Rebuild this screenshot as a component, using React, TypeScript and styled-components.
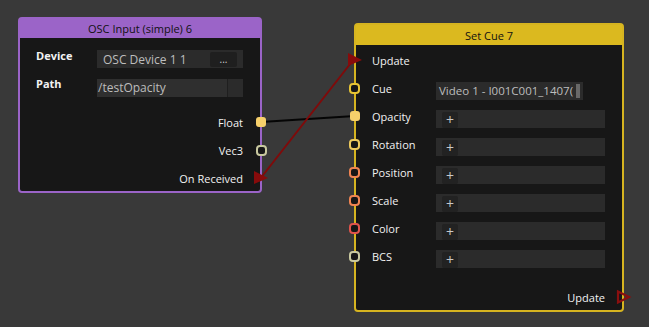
import React from "react";
import styled, { createGlobalStyle } from "styled-components";

const Global = createGlobalStyle`
  html, body { margin: 0; padding: 0; background: #393939; }
  body { font-family: "Open Sans", "Noto Sans", sans-serif; }
`;

const Canvas = styled.div`
  position: relative;
  width: 649px;
  height: 327px;
  overflow: hidden;
  background: #393939;
`;

const Wires = styled.svg`
  position: absolute;
  left: 0;
  top: 0;
  pointer-events: none;
`;

const Node = styled.div<{ $x: number; $y: number; $w: number; $h: number; $color: string }>`
  position: absolute;
  left: ${(p) => p.$x}px;
  top: ${(p) => p.$y}px;
  width: ${(p) => p.$w}px;
  height: ${(p) => p.$h}px;
  box-sizing: border-box;
  border: 2px solid ${(p) => p.$color};
  border-radius: 4px;
  background: #171717;
  display: flex;
  flex-direction: column;
`;

const Header = styled.div<{ $color: string; $text: string; $h: number }>`
  height: ${(p) => p.$h}px;
  flex: none;
  background: ${(p) => p.$color};
  color: ${(p) => p.$text};
  font-size: 11px;
  display: flex;
  align-items: center;
  justify-content: center;
`;

const Body = styled.div<{ $pt: number }>`
  flex: 1;
  display: flex;
  flex-direction: column;
  padding-top: ${(p) => p.$pt}px;
`;

const ParamRow = styled.div`
  height: 28px;
  display: flex;
  align-items: center;
  padding: 0 17px 0 16px;
  position: relative;
`;

const ParamLabel = styled.div<{ $w: number; $bold?: boolean }>`
  width: ${(p) => p.$w}px;
  flex: none;
  color: #f2f2f2;
  font-size: 11px;
  font-weight: ${(p) => (p.$bold ? 700 : 400)};
`;

const Field = styled.div<{ $w?: number; $shift: number }>`
  ${(p) => (p.$w ? `width: ${p.$w}px; flex: none;` : "flex: 1;")}
  position: relative;
  height: 18px;
  margin-top: ${(p) => p.$shift}px;
  background: #2b2b2b;
  display: flex;
  align-items: center;
  color: #bdbdbd;
  font-size: 12px;
  white-space: nowrap;
  box-sizing: border-box;
`;

const FieldText = styled.span<{ $pl: number; $size?: number }>`
  flex: 1;
  padding-left: ${(p) => p.$pl}px;
  font-size: ${(p) => p.$size ?? 12}px;
`;

const MiniButton = styled.div`
  width: 27px;
  height: 15px;
  margin-right: 6px;
  background: #1f1f1f;
  border-radius: 2px;
  color: #cfcfcf;
  font-size: 10px;
  display: flex;
  align-items: center;
  justify-content: center;
`;

const PathInput = styled.div`
  flex: 1;
  height: 100%;
  background: #2f2f2f;
  border-right: 1px solid #1f1f1f;
  display: flex;
  align-items: center;
  padding-left: 1px;
`;

const PathTail = styled.div`
  width: 15px;
  height: 100%;
  background: #2b2b2b;
`;

const PlusBtn = styled.div`
  width: 16px;
  height: 16px;
  margin-left: 6px;
  background: #222;
  border-radius: 2px;
  color: #c8c8c8;
  font-size: 14px;
  line-height: 16px;
  text-align: center;
  margin-top: 2px;
`;

const Caret = styled.div`
  position: absolute;
  right: 3px;
  top: 2px;
  width: 4px;
  height: 14px;
  background: rgba(120, 120, 120, 0.8);
`;

const OutRow = styled.div`
  height: 28px;
  display: flex;
  align-items: center;
  justify-content: flex-end;
  padding-right: 17px;
  color: #f2f2f2;
  font-size: 11px;
  position: relative;
`;

const Spacer = styled.div<{ $h: number }>`
  height: ${(p) => p.$h}px;
  flex: none;
`;

const Pin = styled.div<{ $side: "left" | "right"; $color: string; $filled?: boolean }>`
  position: absolute;
  ${(p) => p.$side}: ${(p) => (p.$filled ? -6 : -7)}px;
  top: 50%;
  width: ${(p) => (p.$filled ? 10 : 11)}px;
  height: ${(p) => (p.$filled ? 10 : 11)}px;
  margin-top: -5px;
  box-sizing: border-box;
  border-radius: ${(p) => (p.$filled ? 3 : 4)}px;
  ${(p) =>
    p.$filled
      ? `background: ${p.$color};`
      : `border: 2px solid ${p.$color}; background: #171717;`}
`;

const TriPin = styled.svg<{ $side: "left" | "right" }>`
  position: absolute;
  ${(p) => p.$side}: -8px;
  top: 50%;
  margin-top: -7px;
  overflow: visible;
`;

const Trigger = ({ side, hollow }: { side: "left" | "right"; hollow?: boolean }) => (
  <TriPin $side={side} width="14" height="14" viewBox="0 0 14 14">
    {hollow ? (
      <polygon points="2,1.5 13,7 2,12.5" fill="none" stroke="#8a0f0f" strokeWidth="2.2" />
    ) : (
      <polygon points="0,0 14,7 0,13" fill="#870b0b" />
    )}
  </TriPin>
);

type Param = { label: string; pin: string; filled?: boolean };

const params: Param[] = [
  { label: "Opacity", pin: "#f7d06b", filled: true },
  { label: "Rotation", pin: "#ecc95c" },
  { label: "Position", pin: "#f08452" },
  { label: "Scale", pin: "#f08452" },
  { label: "Color", pin: "#e0534c" },
  { label: "BCS", pin: "#c9c9a0" },
];

export default function App() {
  return (
    <>
      <Global />
      <Canvas>
        <Wires width="649" height="327">
          <line x1="261" y1="122" x2="355" y2="116" stroke="#050505" strokeWidth="2" />
          <line x1="260" y1="179" x2="354" y2="59" stroke="#7f0a0a" strokeWidth="2" />
        </Wires>

        <Node $x={18} $y={17} $w={244} $h={176} $color="#9b64c8">
          <Header $color="#9b64c8" $text="#111" $h={19}>
            OSC Input (simple) 6
          </Header>
          <Body $pt={3}>
            <ParamRow>
              <ParamLabel $w={61} $bold>Device</ParamLabel>
              <Field $shift={8}>
                <FieldText $pl={6}>OSC Device 1 1</FieldText>
                <MiniButton>...</MiniButton>
              </Field>
            </ParamRow>
            <ParamRow>
              <ParamLabel $w={61} $bold>Path</ParamLabel>
              <Field $shift={9}>
                <PathInput>/testOpacity</PathInput>
                <PathTail />
              </Field>
            </ParamRow>
            <Spacer $h={11} />
            <OutRow>
              Float
              <Pin $side="right" $color="#f7d06b" $filled />
            </OutRow>
            <OutRow>
              Vec3
              <Pin $side="right" $color="#c9c9a0" />
            </OutRow>
            <OutRow>
              On Received
              <Trigger side="right" />
            </OutRow>
          </Body>
        </Node>

        <Node $x={354} $y={23} $w={270} $h={289} $color="#d6b420">
          <Header $color="#dbb91f" $text="#111" $h={20}>
            Set Cue 7
          </Header>
          <Body $pt={1}>
            <ParamRow>
              <ParamLabel $w={64}>Update</ParamLabel>
              <Trigger side="left" />
            </ParamRow>
            <ParamRow>
              <ParamLabel $w={64}>Cue</ParamLabel>
              <Field $w={147} $shift={5}>
                <FieldText $pl={3} $size={11.5}>Video 1 - I001C001_1407(</FieldText>
                <Caret />
              </Field>
              <Pin $side="left" $color="#e6c434" />
            </ParamRow>
            {params.map((p) => (
              <ParamRow key={p.label}>
                <ParamLabel $w={64}>{p.label}</ParamLabel>
                <Field $shift={5}>
                  <PlusBtn>+</PlusBtn>
                </Field>
                <Pin $side="left" $color={p.pin} $filled={p.filled} />
              </ParamRow>
            ))}
            <Spacer $h={13} />
            <OutRow>
              Update
              <Trigger side="right" hollow />
            </OutRow>
          </Body>
        </Node>
      </Canvas>
    </>
  );
}
